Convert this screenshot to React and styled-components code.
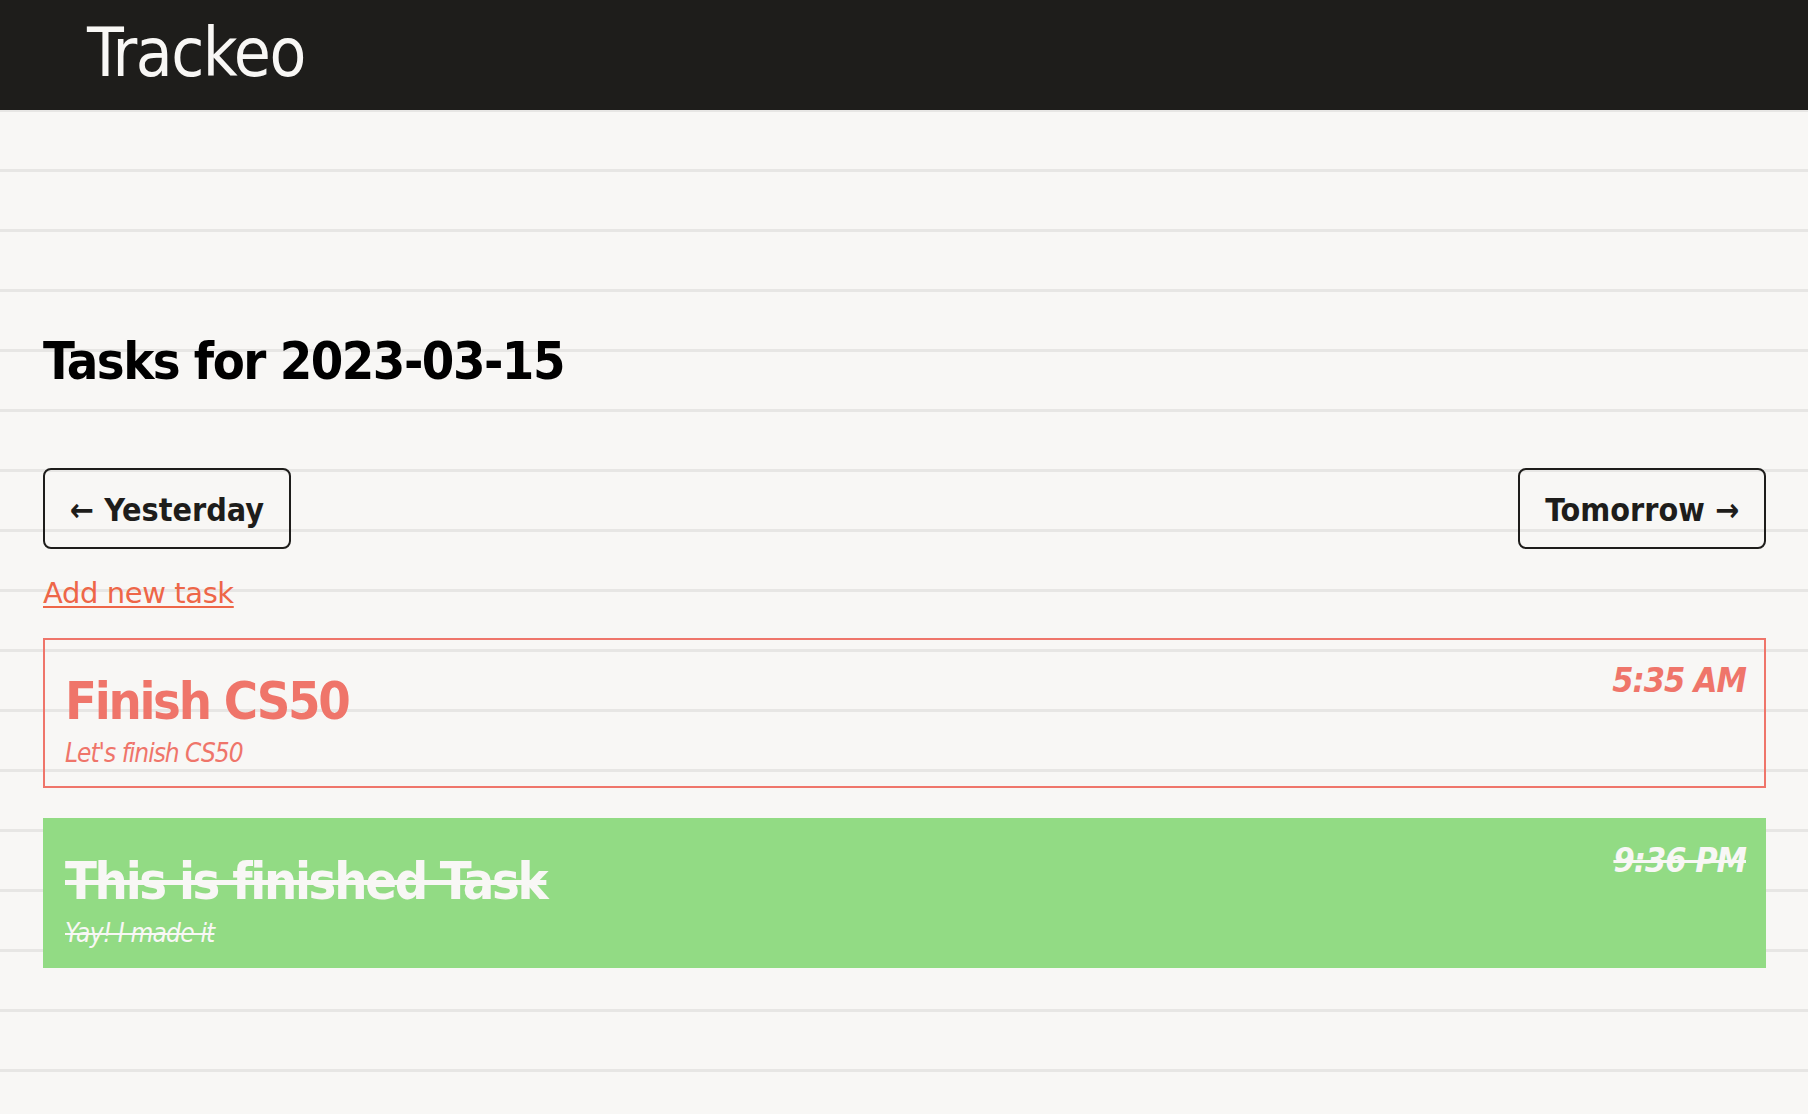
import styled, { createGlobalStyle } from 'styled-components';

const GlobalStyle = createGlobalStyle`
  html, body {
    margin: 0;
    padding: 0;
  }
  body {
    min-height: 100vh;
    font-family: "DejaVu Sans Condensed", "DejaVu Sans", sans-serif;
    font-stretch: condensed;
    background-color: #f8f7f5;
    background-image: repeating-linear-gradient(
      to bottom,
      #f8f7f5 0px,
      #f8f7f5 49px,
      #e7e6e4 49px,
      #e7e6e4 52px,
      #f8f7f5 52px,
      #f8f7f5 60px
    );
  }
`;

const Header = styled.header`
  height: 110px;
  background: #1e1d1b;
  padding: 0 0 0 87px;
  box-sizing: border-box;
`;

const Brand = styled.div`
  color: #f8f7f5;
  font-size: 67px;
  line-height: 106px;
  letter-spacing: -1.5px;
`;

const Main = styled.main`
  padding: 220px 42px 60px 43px;
`;

const Heading = styled.h1`
  margin: 0;
  font-size: 52px;
  font-weight: bold;
  line-height: 62px;
  color: #000;
  letter-spacing: -1.5px;
`;

const NavRow = styled.div`
  display: flex;
  justify-content: space-between;
  margin-top: 76px;
`;

const NavButton = styled.button`
  display: flex;
  align-items: center;
  height: 81px;
  padding: 3px 25px 0;
  box-sizing: border-box;
  border: 2px solid #1e1d1b;
  border-radius: 8px;
  background: transparent;
  color: #1e1d1b;
  font-family: inherit;
  font-stretch: condensed;
  font-size: 32px;
  font-weight: bold;
  line-height: 38px;
  cursor: pointer;
`;

const AddLink = styled.a`
  display: inline-block;
  margin-top: 27px;
  color: #ee6648;
  font-family: "DejaVu Sans", sans-serif;
  font-stretch: normal;
  font-size: 29px;
  line-height: 34px;
  letter-spacing: -0.4px;
  text-decoration: underline;
  text-underline-offset: 3px;
`;

const TaskList = styled.div`
  display: flex;
  flex-direction: column;
  gap: 30px;
  margin-top: 28px;
`;

const TaskCard = styled.div`
  display: flex;
  justify-content: space-between;
  align-items: flex-start;
  padding: 20px 18px 17px 20px;
  border: 2px solid ${p => (p.$done ? '#92db84' : '#ef756a')};
  background: ${p => (p.$done ? '#92db84' : 'transparent')};
  color: ${p => (p.$done ? '#f8f7f5' : '#ef756a')};
  text-decoration: ${p => (p.$done ? 'line-through' : 'none')};
`;

const TaskBody = styled.div`
  display: flex;
  flex-direction: column;
`;

const TaskTitle = styled.h2`
  margin: 10px 0 0;
  font-size: 52px;
  font-weight: bold;
  line-height: 62px;
  letter-spacing: -2.3px;
`;

const TaskDesc = styled.p`
  margin: 6px 0 0;
  font-size: 26px;
  font-style: italic;
  line-height: 31px;
  letter-spacing: ${p => (p.$done ? '-0.8px' : '-1px')};
`;

const TaskTime = styled.div`
  font-size: 34px;
  font-weight: bold;
  font-style: italic;
  line-height: 41px;
  letter-spacing: -1px;
`;

const tasks = [
  { id: 1, title: 'Finish CS50', desc: "Let's finish CS50", time: '5:35 AM', done: false },
  { id: 2, title: 'This is finished Task', desc: 'Yay! I made it', time: '9:36 PM', done: true },
];

function App() {
  return (
    <>
      <GlobalStyle />
      <Header>
        <Brand>Trackeo</Brand>
      </Header>
      <Main>
        <Heading>Tasks for 2023-03-15</Heading>
        <NavRow>
          <NavButton>← Yesterday</NavButton>
          <NavButton>Tomorrow →</NavButton>
        </NavRow>
        <AddLink href="#">Add new task</AddLink>
        <TaskList>
          {tasks.map(task => (
            <TaskCard key={task.id} $done={task.done}>
              <TaskBody>
                <TaskTitle>{task.title}</TaskTitle>
                <TaskDesc $done={task.done}>{task.desc}</TaskDesc>
              </TaskBody>
              <TaskTime>{task.time}</TaskTime>
            </TaskCard>
          ))}
        </TaskList>
      </Main>
    </>
  );
}

export default App;
